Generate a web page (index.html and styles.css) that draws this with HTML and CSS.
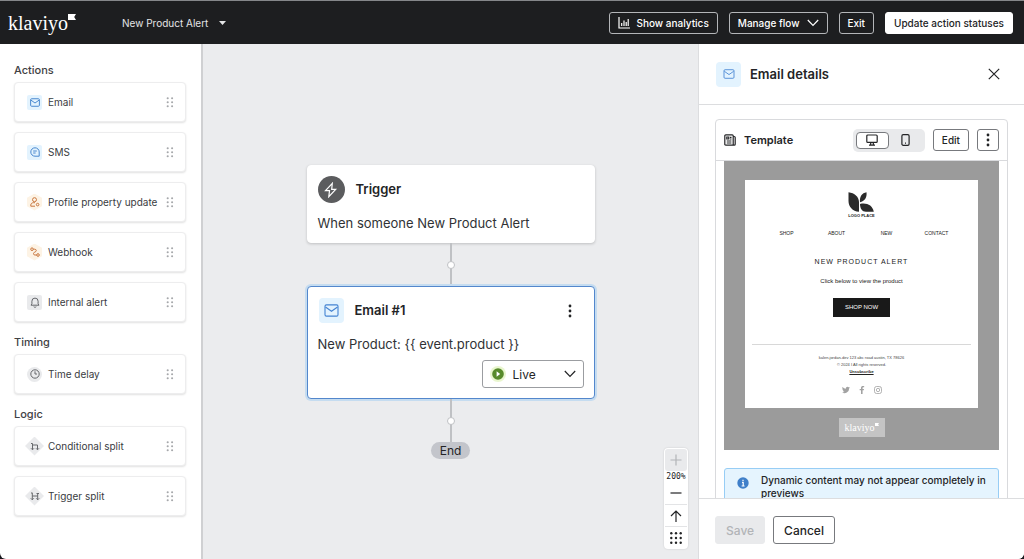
FILE: index.html
```html
<!DOCTYPE html>
<html lang="en">
<head>
<meta charset="utf-8">
<meta name="viewport" content="width=device-width, initial-scale=1">
<title>New Product Alert</title>
<link rel="stylesheet" href="styles.css">
</head>
<body>
<svg class="sprite" aria-hidden="true">
  <symbol id="mail" viewBox="0 0 16 14"><rect x="1" y="1" width="14" height="12" rx="1.5"/><path d="M1.5 3.2 8 7.8l6.500-4.600"/></symbol>
  <symbol id="grip" viewBox="0 0 8 11"><g fill="currentColor" stroke="none"><circle cx="1.700" cy="1.300" r="1.050"/><circle cx="6.100" cy="1.300" r="1.050"/><circle cx="1.700" cy="5.300" r="1.050"/><circle cx="6.100" cy="5.300" r="1.050"/><circle cx="1.700" cy="9.300" r="1.050"/><circle cx="6.100" cy="9.300" r="1.050"/></g></symbol>
  <symbol id="kebab" viewBox="0 0 4 14"><g fill="currentColor" stroke="none"><circle cx="2" cy="2" r="1.400"/><circle cx="2" cy="7" r="1.400"/><circle cx="2" cy="12" r="1.400"/></g></symbol>
  <symbol id="chevron" viewBox="0 0 12 8"><path d="m.8 1 5.200 5.500L11.200 1"/></symbol>
  <symbol id="flag" viewBox="0 0 8 6"><path d="M0 0h8L6.200 3 8 6H0z" fill="currentColor" stroke="none"/></symbol>
</svg>
<div class="app">
  <header class="topbar">
    <a class="logo" href="#" aria-label="klaviyo"><span>klaviyo</span><svg class="logo-flag"><use href="#flag"/></svg></a>
    <button class="flow-name" type="button">New Product Alert
      <svg width="7" height="4" viewBox="0 0 7 4"><path d="M0 0h7L3.500 4z" fill="currentColor" stroke="none"/></svg>
    </button>
    <div class="topbar-actions">
      <button class="bar-btn" type="button"><svg width="12" height="12" viewBox="0 0 12 12"><path d="M1 0v11h11M3.700 9V6M6 9V3.500M8.200 9V5M10.200 9V2"/></svg>Show analytics</button>
      <button class="bar-btn" type="button">Manage flow<svg width="12" height="8"><use href="#chevron"/></svg></button>
      <button class="bar-btn" type="button">Exit</button>
      <button class="bar-btn bar-btn-solid" type="button">Update action statuses</button>
    </div>
  </header>

  <div class="workspace">
    <nav class="sidebar" aria-label="Flow components">
      <section class="group">
        <h2>Actions</h2>
        <ul>
          <li><button class="tile" type="button"><span class="badge blue"><svg width="10" height="9"><use href="#mail"/></svg></span>Email<svg class="grip"><use href="#grip"/></svg></button></li>
          <li><button class="tile" type="button"><span class="badge blue"><svg width="10" height="10" viewBox="0 0 10 10"><path d="M9.200 9.200V5a4.200 4.200 0 1 0-4.200 4.200zM3.200 4h3.600M3.200 6h2.400"/></svg></span>SMS<svg class="grip"><use href="#grip"/></svg></button></li>
          <li><button class="tile" type="button"><span class="badge orange"><svg width="10" height="10" viewBox="0 0 10 10"><circle cx="4.500" cy="2.700" r="2"/><path d="M5 9.200H.8V8c0-1.400 1.200-2.300 2.500-2.300h1.700"/><circle cx="7.600" cy="7.600" r="1.300"/></svg></span>Profile property update<svg class="grip"><use href="#grip"/></svg></button></li>
          <li><button class="tile" type="button"><span class="badge orange"><svg width="10" height="10" viewBox="0 0 10 10"><circle cx="2" cy="2.200" r="1.300"/><circle cx="8" cy="8" r="1.300"/><path d="M3.300 2.200h1.400c2 0 2 2.300.5 2.700-2 .5-2.500 3.100-.2 3.100h1.700"/></svg></span>Webhook<svg class="grip"><use href="#grip"/></svg></button></li>
          <li><button class="tile" type="button"><span class="badge gray"><svg width="10" height="11" viewBox="0 0 10 11"><path d="M1 8.200h8L8.100 6.800V4.200a3.100 3.100 0 0 0-6.200 0v2.600zM3.700 9.700c.7.700 1.900.7 2.600 0"/></svg></span>Internal alert<svg class="grip"><use href="#grip"/></svg></button></li>
        </ul>
      </section>
      <section class="group">
        <h2>Timing</h2>
        <ul>
          <li><button class="tile" type="button"><span class="badge gray round"><svg width="10" height="10" viewBox="0 0 10 10"><circle cx="5" cy="5" r="4.200"/><path d="M5 2.300V5h2"/></svg></span>Time delay<svg class="grip"><use href="#grip"/></svg></button></li>
        </ul>
      </section>
      <section class="group">
        <h2>Logic</h2>
        <ul>
          <li><button class="tile" type="button"><span class="badge diamond"><svg width="10" height="9" viewBox="0 0 10 9"><path d="M1 1.500h1.500v6M2.500 3h5v4.500M1 6.300l1.500 1.500L4 6.300M6 6.300l1.500 1.500L9 6.300"/></svg></span>Conditional split<svg class="grip"><use href="#grip"/></svg></button></li>
          <li><button class="tile" type="button"><span class="badge diamond"><svg width="10" height="9" viewBox="0 0 10 9"><path d="M2.300.8v7M2.300 4h5.400M7.700 2v5.800M.8 6.300l1.500 1.500 1.500-1.500M6.200 6.300l1.500 1.500 1.500-1.500M6.500 1.500h2.500M1 1h1.300"/></svg></span>Trigger split<svg class="grip"><use href="#grip"/></svg></button></li>
        </ul>
      </section>
    </nav>

    <main class="canvas">
      <article class="node">
        <div class="node-head">
          <span class="node-icon trigger"><svg width="14" height="16" viewBox="0 0 14 16"><path d="M8.300 1.300 1.500 8.700h4l-.7 6 6.900-7.400h-4z"/></svg></span>
          <h3>Trigger</h3>
        </div>
        <p>When someone New Product Alert</p>
      </article>
      <div class="connector"><i></i></div>
      <article class="node selected">
        <div class="node-head">
          <span class="node-icon mail"><svg width="15" height="13"><use href="#mail"/></svg></span>
          <h3>Email #1</h3>
          <button class="icon-btn node-menu" type="button" aria-label="Email options"><svg width="4" height="14"><use href="#kebab"/></svg></button>
        </div>
        <p>New Product: {{ event.product }}</p>
        <div class="status">
          <svg class="status-play" width="16" height="16" viewBox="0 0 16 16"><circle cx="8" cy="8" r="8" fill="#e9f6cf"/><circle cx="8" cy="8" r="5.800" fill="#578a2a"/><path d="M6.600 5.200v5.600L10.200 8z" fill="#fff"/></svg>
          <select aria-label="Email status"><option>Live</option><option>Manual</option><option>Draft</option></select>
          <svg class="status-arrow" width="12" height="8"><use href="#chevron"/></svg>
        </div>
      </article>
      <div class="connector"><i></i></div>
      <span class="end">End</span>

      <div class="zoom">
        <button type="button" disabled aria-label="Zoom in"><svg width="12" height="12" viewBox="0 0 12 12"><path d="M6 .5v11M.5 6h11"/></svg></button>
        <output>200%</output>
        <button type="button" aria-label="Zoom out"><svg width="12" height="12" viewBox="0 0 12 12"><path d="M.5 6h11"/></svg></button>
        <button type="button" aria-label="Back to top"><svg width="12" height="12" viewBox="0 0 12 12"><path d="M6 12V1M1 6l5-5 5 5"/></svg></button>
        <button type="button" aria-label="Overview"><svg width="12" height="12" viewBox="0 0 12 12"><g fill="currentColor" stroke="none"><circle cx="1.300" cy="1.300" r="1.200"/><circle cx="6" cy="1.300" r="1.200"/><circle cx="10.700" cy="1.300" r="1.200"/><circle cx="1.300" cy="6" r="1.200"/><circle cx="6" cy="6" r="1.200"/><circle cx="10.700" cy="6" r="1.200"/><circle cx="1.300" cy="10.700" r="1.200"/><circle cx="6" cy="10.700" r="1.200"/><circle cx="10.700" cy="10.700" r="1.200"/></g></svg></button>
      </div>
    </main>

    <aside class="panel">
      <header class="panel-head">
        <span class="node-icon mail"><svg width="12" height="10"><use href="#mail"/></svg></span>
        <h2>Email details</h2>
        <button class="icon-btn" type="button" aria-label="Close"><svg width="12" height="12" viewBox="0 0 12 12"><path d="m.8.800 10.400 10.400M11.200.8.800 11.200"/></svg></button>
      </header>
      <div class="panel-body">
        <section class="template">
          <header class="template-head">
            <svg width="12" height="12" viewBox="0 0 12 12"><path d="M.8 1.800q0-1 1-1h6.400q1 0 1 1v8.400q0 1 1 1H1.800q-1 0-1-1zM9.200 2.500h1q1 0 1 1v6.700q0 1-1 1M2.800 3h2v2h-2zM6 3.300h1.500M6 5h1.500M2.800 7h4.600M2.800 9h4.600"/></svg>
            <h3>Template</h3>
            <div class="segmented" role="group" aria-label="Preview size">
              <button class="on" type="button" aria-label="Desktop" aria-pressed="true"><svg width="12" height="12" viewBox="0 0 12 12"><rect x=".8" y="1" width="10.400" height="7.400" rx="1"/><path d="M4.700 8.500V11M7.300 8.500V11M3 11.200h6"/></svg></button>
              <button type="button" aria-label="Mobile" aria-pressed="false"><svg width="9" height="12" viewBox="0 0 9 12"><rect x=".9" y=".7" width="7.200" height="10.600" rx="1.300"/><path d="M4 9.200h1"/></svg></button>
            </div>
            <button class="btn btn-small" type="button">Edit</button>
            <button class="btn btn-small btn-square" type="button" aria-label="Template options"><svg width="4" height="14"><use href="#kebab"/></svg></button>
          </header>
          <div class="preview">
            <div class="mail-page">
              <div class="brand">
                <svg width="26" height="20" viewBox="0 0 26 20"><path d="M.5.300C6.500 1 11 5 11 10v9.700C4.500 19.500.5 14.500.5 9zM12 10.300C11.500 4.500 14 1 18.500.3 19.200 5.500 16.500 9.500 12 10.300zM12 12c7-1.500 12.500 1.500 13.800 7.700H18C14 19.700 12 16.500 12 12z" fill="#2b2b2b" stroke="none"/></svg>
                <span>LOGO PLACE</span>
              </div>
              <nav class="mail-nav"><a href="#">SHOP</a><a href="#">ABOUT</a><a href="#">NEW</a><a href="#">CONTACT</a></nav>
              <h4>NEW PRODUCT ALERT</h4>
              <p class="mail-text">Click below to view the product</p>
              <a class="shop" href="#">SHOP NOW</a>
              <div class="mail-foot">
                <p>kalen.jordan-dev 123 abc road austin, TX 78626</p>
                <p>© 2024 I All rights reserved.</p>
                <p><a href="#">Unsubscribe</a></p>
                <div class="social">
                  <svg width="8" height="8" viewBox="0 0 24 24"><path d="M24 4.600a10 10 0 0 1-2.800.8 5 5 0 0 0 2.100-2.700 10 10 0 0 1-3.100 1.200 4.900 4.900 0 0 0-8.400 4.500A14 14 0 0 1 1.700 3.100a4.900 4.900 0 0 0 1.500 6.600 5 5 0 0 1-2.200-.6 4.900 4.900 0 0 0 3.900 4.900 5 5 0 0 1-2.200.1 4.900 4.900 0 0 0 4.600 3.400A10 10 0 0 1 0 19.500 14 14 0 0 0 21.500 7.100 10 10 0 0 0 24 4.600z" fill="#a2a2a2" stroke="none"/></svg>
                  <svg width="8" height="8" viewBox="0 0 24 24"><path d="M9 24V13H5V9h4V6c0-4 2.400-6 6-6h3.500v4H16c-1.800 0-2.300.8-2.300 2.200V9H18l-.6 4h-3.700v11z" fill="#a2a2a2" stroke="none"/></svg>
                  <svg width="8" height="8" viewBox="0 0 24 24"><g fill="none" stroke="#a2a2a2" stroke-width="2.400"><rect x="1.500" y="1.500" width="21" height="21" rx="6"/><circle cx="12" cy="12" r="5"/><path d="M18 5v2"/></g></svg>
                </div>
              </div>
            </div>
            <div class="powered"><span>klaviyo</span><svg class="powered-flag"><use href="#flag"/></svg></div>
          </div>
          <div class="notice">
            <svg width="12" height="12" viewBox="0 0 12 12"><circle cx="6" cy="6" r="5.700" fill="#3f7fc9" stroke="none"/><path d="M5 5.300h1.200V9M4.600 9h3M6 2.700v1.200" stroke="#fff" fill="none"/></svg>
            <p>Dynamic content may not appear completely in previews</p>
          </div>
        </section>
      </div>
      <footer class="panel-foot">
        <button class="btn" type="button" disabled>Save</button>
        <button class="btn" type="button">Cancel</button>
      </footer>
    </aside>
  </div>
</div>
</body>
</html>
```

FILE: styles.css
```css
* { box-sizing: border-box; }
html { background: #17171c; }
body { margin: 0; font-family: Inter, "Liberation Sans", sans-serif; color: #232426; font-size: 10px; }
h2, h3, h4, p, ul { margin: 0; padding: 0; }
ul { list-style: none; }
button, select { font: inherit; color: inherit; cursor: pointer; }
button { padding: 0; border: 0; background: none; }
svg { display: block; flex: none; fill: none; stroke: currentColor; stroke-width: 1.2; }
.sprite { position: absolute; width: 0; height: 0; }

.app { display: flex; flex-direction: column; height: 100vh; overflow: hidden; border-radius: 0 0 6px 6px; background: #fff; }

/* Top bar */
.topbar { display: flex; align-items: center; flex: none; height: 44px; padding: 0 11px 0 8px; border-top: 1px solid #85878a; background: #1d1e20; color: #fff; }
.logo { display: flex; align-items: flex-start; width: 114px; color: #fff; text-decoration: none; font-family: "Liberation Serif", serif; font-size: 20px; line-height: 24px; }
.logo-flag { width: 8px; height: 6px; margin-top: 3px; }
.flow-name { display: flex; align-items: center; gap: 11px; font-size: 10px; color: #e4e5e6; }
.topbar-actions { display: flex; gap: 11px; margin-left: auto; }
.bar-btn { display: flex; align-items: center; gap: 7px; height: 22px; padding: 0 8px; border: 1px solid #b4b6b9; border-radius: 3px; font-weight: 500; white-space: nowrap; }
.bar-btn-solid { border-color: #fff; background: #fff; color: #232426; }

.workspace { display: flex; flex: 1; min-height: 0; }

/* Sidebar */
.sidebar { display: flex; flex-direction: column; gap: 12px; flex: none; width: 203px; padding: 18px 15px 0 14px; border-right: 2px solid #cfd0d2; overflow: hidden; }
.group { display: flex; flex-direction: column; gap: 4px; }
.group h2 { font-size: 11px; line-height: 16px; font-weight: 500; color: #3f4144; }
.group ul { display: flex; flex-direction: column; gap: 10px; }
.tile { display: flex; align-items: center; gap: 6px; width: 100%; height: 40px; padding: 0 11px 0 12px; border: 1px solid #ededee; border-radius: 4px; background: #fff; box-shadow: 0 1px 2px #0000001f; text-align: left; color: #3a3c3f; }
.grip { width: 8px; height: 11px; margin-left: auto; color: #a6a8ab; }
.badge { display: grid; place-items: center; width: 15px; height: 15px; border-radius: 2px; }
.badge svg { stroke-width: 1; }
.badge.blue { background: #e3f3fe; color: #4a88cf; }
.badge.blue use { stroke-width: 1.6; }
.badge.orange { height: 17px; margin: -1px 0; background: #fdf3e5; color: #c9773f; clip-path: polygon(50% 0, 100% 25%, 100% 75%, 50% 100%, 0 75%, 0 25%); }
.badge.gray { background: #e9eaec; color: #66686c; }
.badge.round { border-radius: 50%; }
.badge.diamond { background: linear-gradient(45deg, #e9eaec, #e9eaec); clip-path: polygon(50% 0, 100% 50%, 50% 100%, 0 50%); width: 19px; height: 19px; margin: 0 -2px; color: #66686c; }

/* Canvas */
.canvas { position: relative; display: flex; flex-direction: column; align-items: center; flex: 1; min-width: 0; padding-top: 121px; background: #ebecee; }
.node { width: 288px; padding: 10px; border: 1px solid #fff; border-radius: 4px; background: #fff; box-shadow: 0 1px 3px #00000030; }
.node-head { display: flex; align-items: center; gap: 11px; }
.node-head h3 { font-size: 13px; line-height: 27px; font-weight: 600; }
.node p { margin-top: 11px; font-size: 13px; line-height: 18px; color: #303235; }
.node-icon { display: grid; place-items: center; width: 25px; height: 25px; border-radius: 4px; }
.node-icon.trigger { width: 27px; height: 27px; border-radius: 50%; background: #5b5c5e; color: #fff; }
.node-icon.mail { background: #e3f3fe; color: #4584d2; stroke-width: 1.5; }
.node.selected { padding-bottom: 10px; border-color: #5387cc; box-shadow: 0 0 0 2px #c5dcf0; }
.selected .node-head { padding-left: 1px; }
.icon-btn { display: grid; place-items: center; width: 22px; height: 22px; margin-left: auto; }
.node-menu { margin-right: 3px; }
.status { position: relative; display: flex; align-items: center; width: 102px; margin: 7px 0 0 auto; }
.status select { width: 100%; height: 28px; padding: 0 30px 0 30px; border: 1px solid #9b9da1; border-radius: 3px; background: #fff; appearance: none; font-size: 12px; }
.status-play, .status-arrow { position: absolute; pointer-events: none; }
.status-play { left: 8px; stroke: none; }
.status-arrow { right: 8px; }
.connector { display: grid; place-items: center; width: 8px; height: 43px; background: linear-gradient(#bfc1c4, #bfc1c4) center / 2px 100% no-repeat; }
.connector i { width: 8px; height: 8px; border: 1px solid #bfc1c4; border-radius: 50%; background: #fff; }
.end { padding: 0 9px; border-radius: 9px; background: #c3c5cb; font-size: 12px; line-height: 17px; }
.zoom { position: absolute; right: 10px; bottom: 10px; display: flex; flex-direction: column; align-items: stretch; width: 24px; padding: 1px; border-radius: 4px; background: #fff; box-shadow: 0 0 2px #00000026; }
.zoom button { display: grid; place-items: center; height: 22px; }
.zoom button + button { border-top: 1px solid #e3e4e6; }
.zoom button:disabled { border-radius: 3px; background: #e9eaec; color: #b2b4b7; }
.zoom output { display: flex; justify-content: center; font: 8px/11px "DejaVu Sans Mono", monospace; }

/* Details panel */
.panel { display: flex; flex-direction: column; flex: none; width: 326px; border-left: 1px solid #dcdddf; background: #fff; }
.panel-head { display: flex; align-items: center; gap: 9px; flex: none; height: 61px; padding: 0 19px 0 17px; border-bottom: 1px solid #dcdddf; }
.panel-head h2 { font-size: 13px; font-weight: 600; }
.panel-body { flex: 1; min-height: 0; padding: 14px 16px 0; overflow: hidden; }
.template { border: 1px solid #d9dadd; border-radius: 4px; }
.template-head { display: flex; align-items: center; gap: 8px; height: 41px; padding: 0 8px; border-bottom: 1px solid #d9dadd; }
.template-head h3 { font-size: 11px; font-weight: 600; }
.segmented { display: flex; margin-left: auto; padding: 3px; border-radius: 5px; background: #e9eaec; }
.segmented button { display: grid; place-items: center; width: 33px; height: 17px; border: 1px solid transparent; border-radius: 4px; }
.segmented .on { border-color: #77797d; background: #fff; }
.btn { height: 28px; padding: 0 10px; border: 1px solid #77797d; border-radius: 3px; background: #fff; font-size: 12px; font-weight: 500; }
.btn:disabled { border-color: #e9eaec; background: #e9eaec; color: #b2b4b7; }
.btn-small { height: 22px; padding: 0 8px; font-size: 10px; }
.btn-square { display: grid; place-items: center; width: 22px; padding: 0; }
.preview { display: flex; flex-direction: column; align-items: center; margin: 0 8px; padding: 19px 21px 13px; background: #9b9b9b; font-family: "Liberation Sans", Arial, sans-serif; }
.mail-page { display: flex; flex-direction: column; align-items: center; width: 100%; padding: 12px 7px 14px; background: #fff; color: #222; font-size: 6px; }
.brand { display: flex; flex-direction: column; align-items: center; gap: 2px; font-size: 4px; line-height: 4px; font-weight: 700; }
.mail-nav { display: grid; grid-template-columns: repeat(4, 1fr); width: 200px; margin-top: 11px; text-align: center; font-size: 5px; line-height: 8px; }
.mail-nav a { color: #222; text-decoration: none; }
.mail-page h4 { margin-top: 20px; font-size: 7px; line-height: 10px; font-weight: 400; letter-spacing: 1px; }
.mail-text { margin-top: 10px; line-height: 8px; }
.shop { margin-top: 13px; padding: 0 12px; background: #191919; color: #fff; line-height: 19px; text-decoration: none; }
.mail-foot { width: 100%; margin-top: 27px; padding-top: 9px; border-top: 1px solid #d8d8d8; text-align: center; font-size: 4px; line-height: 7px; color: #444; }
.mail-foot a { color: #222; font-weight: 700; }
.social { display: flex; justify-content: center; gap: 8px; margin-top: 11px; }
.powered { display: flex; align-items: flex-start; margin-top: 10px; padding: 3px 6px; background: #c4c4c4; color: #fff; font: 10px/13px "Liberation Serif", serif; }
.powered-flag { width: 4px; height: 3px; margin-top: 2px; }
.notice { display: flex; gap: 12px; margin: 18px 8px 0; padding: 5px 12px; border: 1px solid #97cdf5; border-radius: 3px; background: #e5f4fe; font-weight: 500; line-height: 13px; }
.notice svg { margin-top: 3px; }
.panel-foot { display: flex; gap: 8px; flex: none; height: 61px; padding: 17px 16px 0; border-top: 1px solid #dcdddf; }
```
